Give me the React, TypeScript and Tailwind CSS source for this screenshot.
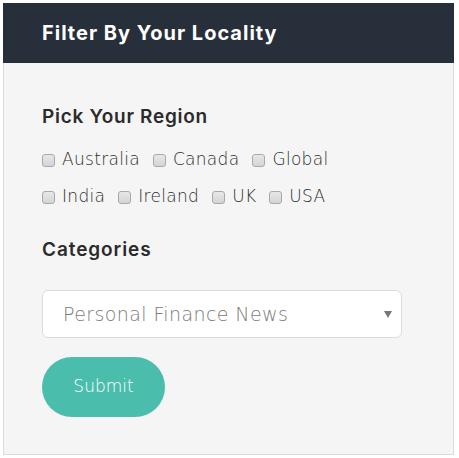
import React from "react";

const font = { fontFamily: "Inter, 'Noto Sans', sans-serif" };
const light = { fontFamily: "'DejaVu Sans', sans-serif" };

function Box({ label }: { label: string }) {
  return (
    <label className="flex items-center mr-[13px]">
      <span className="w-[13px] h-[13px] rounded-[3px] border border-[#a9a9a9] bg-gradient-to-b from-[#e8e8e8] to-[#d4d4d4] mr-[7px]" />
      <span className="text-[17px] font-extralight text-[#2e2e2e] tracking-[0.3px]" style={light}>{label}</span>
    </label>
  );
}

export default function App() {
  return (
    <div className="bg-white w-[459px] h-[458px] p-[3px]" style={font}>
      <div className="w-[451px] h-[452px] flex flex-col">
        <div className="h-[60px] bg-[#272f3a] flex items-center px-[39px]">
          <span className="text-white text-[20px] font-bold tracking-[1px]">Filter By Your Locality</span>
        </div>
        <div className="flex-1 bg-[#f5f5f5] border-x border-b border-[#dcdcdc] px-[38px] pt-[41px]">
          <h3 className="text-[19px] font-semibold text-[#2b2b2b] leading-[26px] tracking-[0.7px]">Pick Your Region</h3>
          <div className="mt-[18px] flex flex-col gap-[13px]">
            <div className="flex items-center h-[24px]">
              <Box label="Australia" />
              <Box label="Canada" />
              <Box label="Global" />
            </div>
            <div className="flex items-center h-[24px]">
              <Box label="India" />
              <Box label="Ireland" />
              <Box label="UK" />
              <Box label="USA" />
            </div>
          </div>
          <h3 className="mt-[28px] text-[19px] font-semibold text-[#2b2b2b] leading-[26px] tracking-[0.9px]">Categories</h3>
          <div className="mt-[27px] w-[360px] h-[48px] bg-white border border-[#dcdcdc] rounded-[6px] flex items-center pl-[20px] pr-[9px]">
            <span className="flex-1 text-[19px] font-extralight text-[#7a7a7a] tracking-[0.4px]" style={light}>Personal Finance News</span>
            <svg width="8" height="7" viewBox="0 0 8 7"><path d="M0 0H8L4 7Z" fill="#777" /></svg>
          </div>
          <button className="mt-[19px] w-[123px] h-[60px] rounded-full bg-[#4bbdad] text-white text-[17px] font-extralight" style={light}>Submit</button>
        </div>
      </div>
    </div>
  );
}
